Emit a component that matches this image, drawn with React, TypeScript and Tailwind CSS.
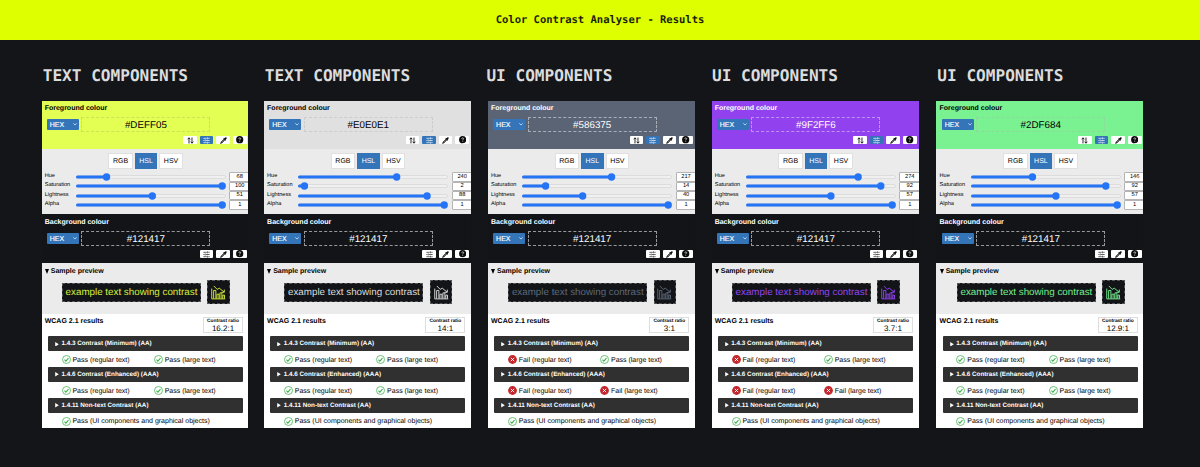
import React from "react";

type Result = { pass: boolean };

type Analysis = {
  heading: string;
  headingClass: string;
  panelClass: string;
  shiftClass: string;
  hex: string;
  fgClass: string;
  lightText: boolean;
  fieldBorder: string;
  sampleClass: string;
  hsl: [number, number, number];
  ratio: string;
  aa: [Result, Result];
  aaa: [Result, Result];
};

const ok: Result = { pass: true };
const no: Result = { pass: false };

const analyses: Analysis[] = [
  {
    heading: "TEXT COMPONENTS",
    headingClass: "ml-[0.4px]",
    panelClass: "w-[205.7px]",
    shiftClass: "ml-0",
    hex: "#DEFF05",
    fgClass: "bg-[#e3ff54]",
    lightText: false,
    fieldBorder: "border-[#cbe35a]",
    sampleClass: "text-[#d8ef3a]",
    hsl: [68, 100, 51],
    ratio: "16.2:1",
    aa: [ok, ok],
    aaa: [ok, ok],
  },
  {
    heading: "TEXT COMPONENTS",
    headingClass: "ml-[0.5px]",
    panelClass: "w-[207px]",
    shiftClass: "ml-[0.4px]",
    hex: "#E0E0E1",
    fgClass: "bg-[#e0e0e0]",
    lightText: false,
    fieldBorder: "border-[#cdcdcd]",
    sampleClass: "text-[#dcdcdd]",
    hsl: [240, 2, 88],
    ratio: "14:1",
    aa: [ok, ok],
    aaa: [ok, ok],
  },
  {
    heading: "UI COMPONENTS",
    headingClass: "ml-[-1.6px]",
    panelClass: "w-[207px]",
    shiftClass: "ml-[0.6px]",
    hex: "#586375",
    fgClass: "bg-[#5b6475]",
    lightText: true,
    fieldBorder: "border-[#a9aeb8]",
    sampleClass: "text-[#5e687a]",
    hsl: [217, 14, 40],
    ratio: "3:1",
    aa: [no, ok],
    aaa: [no, no],
  },
  {
    heading: "UI COMPONENTS",
    headingClass: "ml-0",
    panelClass: "w-[207.2px]",
    shiftClass: "ml-[0.3px]",
    hex: "#9F2FF6",
    fgClass: "bg-[#9241ee]",
    lightText: true,
    fieldBorder: "border-[#bf92f2]",
    sampleClass: "text-[#9245f0]",
    hsl: [274, 92, 57],
    ratio: "3.7:1",
    aa: [no, ok],
    aaa: [no, no],
  },
  {
    heading: "UI COMPONENTS",
    headingClass: "ml-[1.2px]",
    panelClass: "w-[206.4px]",
    shiftClass: "ml-[1px]",
    hex: "#2DF684",
    fgClass: "bg-[#7bf292]",
    lightText: false,
    fieldBorder: "border-[#8ddb9c]",
    sampleClass: "text-[#76ee90]",
    hsl: [146, 92, 57],
    ratio: "12.9:1",
    aa: [ok, ok],
    aaa: [ok, ok],
  },
];

function SwapIcon() {
  return (
    <svg viewBox="0 0 8 8" className="h-[7px] w-[7px]" fill="none" stroke="#111" strokeWidth="1">
      <path d="M2.3 7.4V1M0.8 2.6 2.3 0.9 3.8 2.6M5.7 0.6V7M4.2 5.4 5.7 7.1 7.2 5.4" />
    </svg>
  );
}

function SlidersIcon({ color }: { color: string }) {
  return (
    <svg viewBox="0 0 8 8" className="h-[7px] w-[7px]" fill="none" stroke={color} strokeWidth="0.8">
      <path d="M0.4 1.5H4.4M6 1.5H7.6M0.4 4H1.8M3.4 4H7.6M0.4 6.5H4.4M6 6.5H7.6M5.2 0.4V2.6M2.6 2.9V5.1M5.2 5.4V7.6" />
    </svg>
  );
}

function DropperIcon() {
  return (
    <svg viewBox="0 0 8 8" className="h-[7px] w-[7px]" fill="#0b0b0b">
      <path d="M5 1.5 6 0.6Q6.8 0 7.5 0.6 8 1.3 7.4 2L6.5 3 6.8 3.5 6.1 4.2 3.8 1.9 4.5 1.2Z" />
      <path d="M4.3 2.7 1.2 5.8 0.6 7.4 2.2 6.8 5.3 3.7Z" stroke="#0b0b0b" strokeWidth="0.6" />
      <path d="M4.3 3.6 1.7 6.2" stroke="#fff" strokeWidth="0.5" />
    </svg>
  );
}

function HelpIcon() {
  return (
    <svg viewBox="0 0 8 8" className="h-[7.4px] w-[7.4px]">
      <circle cx="4" cy="4" r="3.9" fill="#0b0b0b" />
      <path d="M2.9 3.1Q3 2.1 4 2.1 5.1 2.1 5.1 3 5.1 3.6 4 4.1V4.7M4 5.4V6.2" fill="none" stroke="#fff" strokeWidth="0.7" />
    </svg>
  );
}

function ChartIcon() {
  return (
    <svg viewBox="0 0 16 16" className="h-[15px] w-[15px]" fill="none" stroke="currentColor" strokeWidth="1">
      <path d="M0.8 3.8V14.8H15.2M2.8 14.5V5.8H5.2V14.5M6.3 14.5V9.8H8.5V14.5M9.5 14.5V8.4H11.6V14.5M12.6 14.5V10.8H14.4V14.5" />
      <path d="M3 1 6.6 4.7 8.8 3.4 13.8 7.4M14.2 4.9V7.8H11.2" />
    </svg>
  );
}

function StatusIcon({ pass }: Result) {
  return pass ? (
    <svg viewBox="0 0 18 18" className="h-[9px] w-[9px] shrink-0" fill="none" stroke="#3fb24f">
      <circle cx="9" cy="9" r="8" strokeWidth="1.5" />
      <path d="M4.9 9.4 7.8 12.2 13 6.2" strokeWidth="2.2" />
    </svg>
  ) : (
    <svg viewBox="0 0 18 18" className="h-[9px] w-[9px] shrink-0">
      <circle cx="9" cy="9" r="8.8" fill="#c4262b" />
      <path d="M5.7 5.7 12.3 12.3M12.3 5.7 5.7 12.3" stroke="#fff" strokeWidth="2" />
    </svg>
  );
}

function IconButton({ active, children }: { active?: boolean; children: React.ReactNode }) {
  return (
    <span
      className={`flex h-[8px] w-[13.6px] items-center justify-center rounded-[1px] ${
        active ? "bg-[#3474b8]" : "bg-white"
      }`}
    >
      {children}
    </span>
  );
}

function ColourField({ value, border }: { value: string; border: string }) {
  return (
    <div className="flex items-center pl-[4.5px]">
      <div className="flex h-[11px] w-[32px] items-center justify-between rounded-[1px] bg-[#3474b8] pr-[2px] pl-[3px] text-[7px] leading-none text-white [-webkit-text-stroke:0.15px_currentColor]">
        <span className="pt-[1px]">HEX</span>
        <svg viewBox="0 0 6 4" className="h-[2.6px] w-[4px]" fill="none" stroke="#fff" strokeWidth="1">
          <path d="M0.5 0.5 3 3.2 5.5 0.5" />
        </svg>
      </div>
      <div
        className={`ml-[2.6px] flex h-[15px] w-[129px] items-center justify-center border border-dashed pt-[2px] text-[9.8px] leading-none ${border}`}
      >
        {value}
      </div>
    </div>
  );
}

function SliderRow({ label, value, max }: { label: string; value: number; max: number }) {
  const at = 3.6 + (value / max) * 142.6;
  return (
    <div className="flex h-[9.35px] items-center">
      <span className="w-[31.4px] shrink-0 text-[5.6px] leading-none">{label}</span>
      <svg viewBox="0 0 150 8" className="h-[8px] w-[150px] shrink-0">
        <rect x="0.3" y="2.6" width="149.2" height="2.8" rx="1.4" fill="#f3f3f3" stroke="#c6c6c6" strokeWidth="0.5" />
        <rect x="0" y="2.4" width={at} height="3.2" rx="1.5" fill="#2574f5" />
        <circle cx={at} cy="4" r="3.7" fill="#2574f5" />
      </svg>
      <span className="ml-[3.2px] flex h-[9.3px] w-[21px] shrink-0 items-center justify-center rounded-[1px] border border-[#b4b4b4] bg-white pt-[1.4px] text-[5.7px] leading-none">
        {value}
      </span>
    </div>
  );
}

function Criterion({ title }: { title: string }) {
  return (
    <div className="ml-[5.7px] flex h-[15px] w-[195px] items-center rounded-[1px] bg-[#303030] pl-[7px] text-[6.3px] leading-none font-bold text-white">
      <svg viewBox="0 0 4 5" className="mr-[2.4px] h-[4.6px] w-[4px]" fill="#fff">
        <path d="M0 0 4 2.5 0 5Z" />
      </svg>
      <span className="pt-[1.4px]">{title}</span>
    </div>
  );
}

function Outcome({ result, detail }: { result: Result; detail: string }) {
  return (
    <div className="flex w-[92.3px] items-center gap-[1.8px] text-[7px] leading-none whitespace-nowrap">
      <StatusIcon pass={result.pass} />
      <span className="pt-[1.6px]">
        {result.pass ? "Pass" : "Fail"} ({detail})
      </span>
    </div>
  );
}

function Outcomes({ children }: { children: React.ReactNode }) {
  return <div className="flex h-[15.8px] items-center pt-[0.6px] pl-[19.3px]">{children}</div>;
}

function Panel({ a }: { a: Analysis }) {
  return (
    <div className={`h-[326.5px] overflow-hidden text-black ${a.panelClass}`}>
      <section className={`h-[48px] ${a.fgClass}`}>
        <div className={`w-[210px] ${a.shiftClass}`}>
          <h3
            className={`h-[16px] pt-[4px] pl-[2.4px] text-[7px] leading-[8px] font-bold ${
              a.lightText ? "text-white" : ""
            }`}
          >
            Foreground colour
          </h3>
          <div className={a.lightText ? "text-white" : ""}>
            <ColourField value={a.hex} border={a.fieldBorder} />
          </div>
          <div className="flex gap-[3px] pt-[4px] pl-[141px]">
            <IconButton>
              <SwapIcon />
            </IconButton>
            <IconButton active>
              <SlidersIcon color="#fff" />
            </IconButton>
            <IconButton>
              <DropperIcon />
            </IconButton>
            <IconButton>
              <HelpIcon />
            </IconButton>
          </div>
        </div>
      </section>

      <section className="h-[65px] bg-[#ebebeb]">
        <div className={`w-[210px] pt-[4px] ${a.shiftClass}`}>
          <div className="flex h-[15.6px] gap-[2px] pl-[66px] text-[7px] leading-none">
            <span className="flex w-[24.5px] items-center justify-center border border-[#e0e0e0] bg-white pt-[1.4px]">
              RGB
            </span>
            <span className="flex w-[22.5px] items-center justify-center bg-[#3474b8] pt-[1.4px] text-white">HSL</span>
            <span className="flex w-[23.5px] items-center justify-center border border-[#e0e0e0] bg-white pt-[1.4px]">
              HSV
            </span>
          </div>
          <div className="pt-[3.6px] pl-[2.4px]">
            <SliderRow label="Hue" value={a.hsl[0]} max={360} />
            <SliderRow label="Saturation" value={a.hsl[1]} max={100} />
            <SliderRow label="Lightness" value={a.hsl[2]} max={100} />
            <SliderRow label="Alpha" value={1} max={1} />
          </div>
        </div>
      </section>

      <section className="h-[49px] bg-[#121417] text-white">
        <div className={`w-[210px] ${a.shiftClass}`}>
          <h3 className="h-[17px] pt-[5px] pl-[2.4px] text-[7px] leading-[8px] font-bold">Background colour</h3>
          <ColourField value="#121417" border="border-[#96989a]" />
          <div className="flex gap-[3px] pt-[4px] pl-[157.6px]">
            <IconButton>
              <SlidersIcon color="#222" />
            </IconButton>
            <IconButton>
              <DropperIcon />
            </IconButton>
            <IconButton>
              <HelpIcon />
            </IconButton>
          </div>
        </div>
      </section>

      <section className="h-[51px] bg-[#ebebeb]">
        <div className={`w-[210px] ${a.shiftClass}`}>
          <h3 className="flex h-[17px] items-center pl-[2.8px] text-[7px] leading-none font-bold">
            <svg viewBox="0 0 4 5" className="mr-[1.7px] h-[5px] w-[4px]">
              <path d="M0 0H4L2 5Z" />
            </svg>
            Sample preview
          </h3>
          <div className={`flex items-center gap-[6.5px] pl-[19.7px] ${a.sampleClass}`}>
            <div className="flex h-[19px] w-[139px] items-center justify-center border border-dashed border-[#55575a] bg-[#121417] pt-[2px] text-[9.8px] leading-none whitespace-nowrap">
              example text showing contrast
            </div>
            <div className="flex h-[24px] w-[22.4px] items-center justify-center border border-dashed border-[#55575a] bg-[#121417]">
              <ChartIcon />
            </div>
          </div>
        </div>
      </section>

      <section className="h-[113.5px] bg-white">
        <div className={`w-[210px] ${a.shiftClass}`}>
          <div className="flex h-[22.4px] justify-between pt-[3px] pr-[9.3px] pl-[2.4px]">
            <h3 className="pt-[1px] text-[7px] leading-[8px] font-bold">WCAG 2.1 results</h3>
            <div className="flex h-[16px] w-[40px] flex-col items-center border border-[#dedede]">
              <span className="pt-[0.6px] text-[4.85px] leading-[5px] font-bold whitespace-nowrap">Contrast ratio</span>
              <span className="pt-[0.4px] text-[8px] leading-[9px]">{a.ratio}</span>
            </div>
          </div>
          <Criterion title="1.4.3 Contrast (Minimum) (AA)" />
          <Outcomes>
            <Outcome result={a.aa[0]} detail="regular text" />
            <Outcome result={a.aa[1]} detail="large text" />
          </Outcomes>
          <Criterion title="1.4.6 Contrast (Enhanced) (AAA)" />
          <Outcomes>
            <Outcome result={a.aaa[0]} detail="regular text" />
            <Outcome result={a.aaa[1]} detail="large text" />
          </Outcomes>
          <Criterion title="1.4.11 Non-text Contrast (AA)" />
          <Outcomes>
            <Outcome result={ok} detail="UI components and graphical objects" />
          </Outcomes>
        </div>
      </section>
    </div>
  );
}

export default function App() {
  return (
    <main className="h-[467px] w-[1200px] overflow-hidden bg-[#131519] font-['Liberation_Sans',Arial,sans-serif] [text-rendering:geometricPrecision]">
      <header className="flex h-[40px] items-center justify-center bg-[#ddff00] pt-[2px] font-['DejaVu_Sans_Mono','Liberation_Mono',monospace] text-[10.5px] font-bold text-[#191c08]">
        <h1 className="whitespace-pre">Color Contrast Analyser - Results</h1>
      </header>
      <div className="grid grid-cols-[222px_223.7px_224px_224.2px_206.4px] pt-[24px] pl-[42.3px]">
        {analyses.map((a) => (
          <article key={a.hex}>
            <h2
              className={`h-[37px] font-['DejaVu_Sans_Mono','Liberation_Mono',monospace] text-[16.1px] leading-[24px] font-bold whitespace-nowrap text-[#dcdcdd] ${a.headingClass}`}
            >
              {a.heading}
            </h2>
            <Panel a={a} />
          </article>
        ))}
      </div>
    </main>
  );
}
